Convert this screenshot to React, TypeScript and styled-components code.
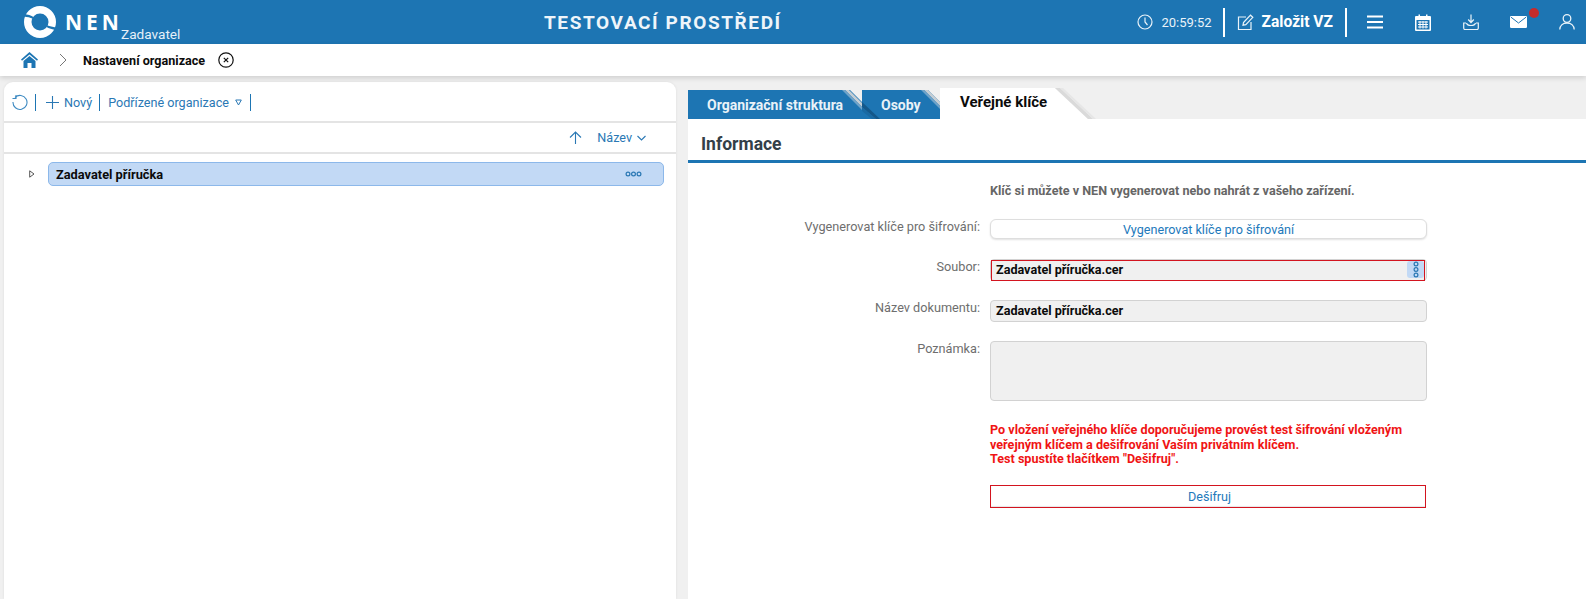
import React from "react";
import styled, { createGlobalStyle } from "styled-components";

const Global = createGlobalStyle`
  html, body { margin: 0; padding: 0; height: 100%; overflow: hidden; background: #f0f0f0; }
  body { font-family: Roboto, "Liberation Sans", sans-serif; }
  #root { height: 599px; width: 1586px; }
  * { box-sizing: border-box; }
`;

const Page = styled.div`
  display: flex; flex-direction: column; width: 1586px; height: 599px; overflow: hidden; background: #f0f0f0;
`;
const Header = styled.header`
  flex: none; height: 44px; background: #1d75b3; color: #fff; display: flex; align-items: stretch;
`;
const Brand = styled.div`
  width: 544px; flex: none; display: flex; padding-left: 24px; align-items: flex-start;
`;
const LogoMark = styled.svg`
  width: 32px; height: 32px; margin-top: 6px; flex: none;
`;
const BrandName = styled.span`
  font-weight: 700; font-size: 21px; letter-spacing: 4px; line-height: 26px; margin: 9px 0 0 9px; width: 56px; flex: none;
  font-family: "Open Sans", Roboto, sans-serif;
`;
const BrandRole = styled.span`
  font-size: 13.6px; line-height: 16px; margin-top: 26px; color: #e6f0f8;
`;
const EnvTitle = styled.div`
  font-weight: 700; font-size: 19px; letter-spacing: 1.6px; line-height: 46px; white-space: nowrap; color: #eef5fa;
`;
const HeaderRight = styled.div`
  margin-left: auto; display: flex; align-items: center; height: 44px; padding-right: 11px;
`;
const TimeText = styled.span`
  font-size: 13px; margin: 0 11px 0 8px; color: #eaf3f9;
`;
const HeaderSep = styled.span`
  width: 2px; height: 29px; background: #fff; flex: none;
`;
const CreateText = styled.span`
  font-size: 15.6px; font-weight: 700; margin: 0 12px 0 8px; white-space: nowrap;
`;
const HeaderIcon = styled.span<{ $gap: number }>`
  position: relative; display: flex; margin-left: ${(p) => p.$gap}px; color: #fff;
`;
const Badge = styled.span`
  position: absolute; width: 10px; height: 10px; border-radius: 50%; background: #c62b2b; right: -12px; top: -8px;
`;
const Crumbs = styled.nav`
  flex: none; height: 32px; background: #fff; display: flex; align-items: center; padding-left: 21px;
  box-shadow: 0 2px 5px rgba(0,0,0,.14); position: relative; z-index: 1;
`;
const CrumbChevron = styled.svg`
  margin-left: 21px;
`;
const CrumbText = styled.span`
  font-size: 12.6px; font-weight: 700; color: #0b0b0b; margin: 0 13px 0 16px; white-space: nowrap;
`;
const Body = styled.main`
  flex: 1; display: flex; min-height: 0; padding: 6px 0 0 4px; align-items: stretch;
`;
const LeftPanel = styled.section`
  width: 672px; flex: none; background: #fff; border-radius: 9px 9px 0 0; box-shadow: 0 0 3px rgba(0,0,0,.08);
  display: flex; flex-direction: column;
`;
const Toolbar = styled.div`
  height: 41px; flex: none; display: flex; align-items: center; padding: 1px 0 0 8px; border-bottom: 2px solid #e4e4e4;
  color: #1d75b3; font-size: 12.6px;
`;
const ToolSep = styled.span<{ $gap: number }>`
  width: 1px; height: 17px; background: #1d75b3; flex: none; margin-left: ${(p) => p.$gap}px;
`;
const ToolLabel = styled.span<{ $gap: number }>`
  white-space: nowrap; color: #2a78b4; margin-left: ${(p) => p.$gap}px;
`;
const ToolIcon = styled.svg<{ $gap: number }>`
  flex: none; margin-left: ${(p) => p.$gap}px;
`;
const SortRow = styled.div`
  height: 31px; flex: none; display: flex; align-items: center; justify-content: flex-end; padding-right: 30px;
  border-bottom: 2px solid #e4e4e4; color: #1d75b3; font-size: 12.6px;
`;
const TreeArea = styled.div`
  padding: 8px 12px 0 25px; display: flex; align-items: center; gap: 13px;
`;
const TreeRow = styled.div`
  flex: 1; height: 24px; background: #c2d9f5; border: 1px solid #8cb8ea; border-radius: 5px; display: flex; align-items: center;
  justify-content: space-between; padding: 0 21px 0 7px; font-size: 12.8px; font-weight: 700; color: #0b0b0b;
`;
const RightPanel = styled.section`
  width: 898px; margin-left: 12px; flex: none; display: flex; flex-direction: column; padding-top: 6px;
`;
const TabsWrap = styled.div`
  position: relative; display: flex; flex: none;
`;
const Tabs = styled.div`
  height: 31px; flex: none; display: flex; align-items: flex-end;
`;
const Tab = styled.div<{ $w: number }>`
  width: ${(p) => p.$w}px; height: 29px; background: #1d75b3; color: #e9f2f8;
  font-size: 14px; font-weight: 700; line-height: 30px; padding-left: 19px; white-space: nowrap;
  clip-path: polygon(0 0, calc(100% - 12px) 0, 100% 12px, 100% 100%, 0 100%);
`;
const ActiveTab = styled.div`
  width: 148px; height: 31px; background: #fff; color: #0b0b0b; font-size: 15px; font-weight: 700;
  line-height: 29px; padding-left: 20px; white-space: nowrap;
  clip-path: polygon(0 0, 115px 0, 100% 100%, 0 100%);
`;
const TabEdges = styled.svg`
  position: absolute; left: 0; top: 0; width: 410px; height: 31px; pointer-events: none;
`;
const Content = styled.div`
  flex: 1; background: #fff; min-height: 0; display: flex; flex-direction: column;
`;
const Heading = styled.h2`
  margin: 0; height: 44px; flex: none; border-bottom: 3px solid #1d75b3; padding-left: 13px; font-size: 17.5px; font-weight: 700;
  line-height: 51px; color: #333f48;
`;
const Form = styled.div`
  display: grid; grid-template-columns: 302px 437px; column-gap: 0; padding-top: 19px; align-items: start;
`;
const Hint = styled.div`
  grid-column: 2; font-size: 12.6px; font-weight: 700; color: #666; line-height: 18px; height: 37px;
`;
const Label = styled.div<{ $h: number }>`
  grid-column: 1; text-align: right; padding-right: 10px; font-size: 12.7px; color: #6e6e6e; line-height: 16px; height: ${(p) => p.$h}px; white-space: nowrap;
`;
const ActionButton = styled.div`
  grid-column: 2; height: 20px; margin-bottom: 20px; border: 1px solid #dedede; border-radius: 6px; background: #fff; text-align: center;
  font-size: 12.6px; line-height: 19px; color: #2279bb; box-shadow: 0 1px 2px rgba(0,0,0,.12);
`;
const Field = styled.div`
  grid-column: 2; position: relative; height: 22px; margin-bottom: 19px; background: #f0f0f0; border: 1px solid #d2d2d2; border-radius: 4px;
  font-size: 12.6px; font-weight: 700; color: #0b0b0b; line-height: 20px; padding-left: 5px;
`;
const FieldAlert = styled.span`
  position: absolute; left: 0; top: 0; right: 1px; bottom: -1px; border: 1px solid #d3141f; pointer-events: none;
`;
const DotsButton = styled.span`
  position: absolute; right: 2px; top: 1px; width: 17px; height: 17px; background: #c2d9f5; border-radius: 3px; display: flex; align-items: center; justify-content: center;
`;
const TextBox = styled.div`
  grid-column: 2; height: 60px; margin-bottom: 22px; background: #f0f0f0; border: 1px solid #d2d2d2; border-radius: 4px;
`;
const Warning = styled.div`
  grid-column: 2; font-size: 12.6px; font-weight: 700; color: #f01414; line-height: 14.7px; height: 62px; white-space: nowrap;
`;
const DecryptButton = styled.div`
  grid-column: 2; height: 23px; width: 436px; border: 1px solid #d3141f; background: #fff; text-align: center; font-size: 12.6px; line-height: 22px; color: #2279bb;
  padding-left: 3px; box-shadow: inset 0 -1px 1px rgba(0,0,0,.1);
`;

const Dots = ({ vertical }: { vertical?: boolean }) => (
  <svg width={vertical ? 6 : 17} height={vertical ? 17 : 6} viewBox={vertical ? "0 0 6 17" : "0 0 17 6"} fill="none" stroke="#2a78b4" strokeWidth="1.2">
    {[3, 8.5, 14].map((c) => (vertical ? <circle key={c} cx="3" cy={c} r="1.9" /> : <circle key={c} cx={c} cy="3" r="1.9" />))}
  </svg>
);

export default function App() {
  return (
    <Page>
      <Global />
      <Header>
        <Brand>
          <LogoMark viewBox="0 0 32 32">
            <path fill="#fff" fillRule="evenodd" d="M16 0A16 16 0 1 1 16 32A16 16 0 1 1 16 0ZM16 7.5A8.5 8.5 0 1 0 16 24.5A8.5 8.5 0 1 0 16 7.5Z" />
            <path fill="#1d75b3" d="M-0.5 8C3.5 8.5 7 9.2 9.8 11.2L8.8 12.8C6.2 11.6 3 11 -0.5 10.5Z" />
            <path fill="#1d75b3" d="M32.5 24C28.5 23.5 25 22.8 22.2 20.8L23.2 19.2C25.8 20.4 29 21 32.5 21.5Z" />
          </LogoMark>
          <BrandName>NEN</BrandName>
          <BrandRole>Zadavatel</BrandRole>
        </Brand>
        <EnvTitle>TESTOVACÍ PROSTŘEDÍ</EnvTitle>
        <HeaderRight>
          <svg width="16" height="16" viewBox="0 0 16 16" fill="none" stroke="#eaf3f9" strokeWidth="1.2"><circle cx="8" cy="8" r="7" /><path d="M8 3.5V8L10.5 11" /></svg>
          <TimeText>20:59:52</TimeText>
          <HeaderSep />
          <HeaderIcon $gap={12}>
            <svg width="17" height="17" viewBox="0 0 17 17" fill="none" stroke="#eaf3f9" strokeWidth="1.2"><path d="M9 3H1.5V15.5H14V8" /><path d="M6.5 8.5L13.5 1.2L15.8 3.3L8.8 10.6L6 11.2Z" /></svg>
          </HeaderIcon>
          <CreateText>Založit VZ</CreateText>
          <HeaderSep />
          <HeaderIcon $gap={20}>
            <svg width="16" height="14" viewBox="0 0 16 14" fill="none" stroke="#fff" strokeWidth="2"><path d="M0 1.5H16M0 7H16M0 12.5H16" /></svg>
          </HeaderIcon>
          <HeaderIcon $gap={32}>
            <svg width="16" height="17" viewBox="0 0 16 17"><path fill="#fff" fillRule="evenodd" d="M1 2H3.5V0.5H5V2H11V0.5H12.5V2H15Q16 2 16 3V16Q16 17 15 17H1Q0 17 0 16V3Q0 2 1 2ZM1.5 6V15.5H14.5V6Z" /><path stroke="#fff" strokeWidth="1" d="M3 8H13M3 10.5H13M3 13H13M5 7V14.5M8 7V14.5M11 7V14.5" /></svg>
          </HeaderIcon>
          <HeaderIcon $gap={32}>
            <svg width="16" height="16" viewBox="0 0 16 16" fill="none" stroke="#eaf3f9" strokeWidth="1.2"><path d="M8 0.5V8M5.2 5.5L8 8.5L10.8 5.5" /><path d="M3 9H0.7V14Q0.7 15.5 2 15.5H14Q15.3 15.5 15.3 14V9H13" /><path d="M3.5 9C4 11 6 11.5 8 11.5S12 11 12.5 9" /></svg>
          </HeaderIcon>
          <HeaderIcon $gap={31}>
            <svg width="17" height="12" viewBox="0 0 17 12"><rect width="17" height="12" rx="1.2" fill="#fff" /><path d="M1 1.2L8.5 7L16 1.2" fill="none" stroke="#1d75b3" strokeWidth="1" /></svg>
            <Badge />
          </HeaderIcon>
          <HeaderIcon $gap={32}>
            <svg width="16" height="16" viewBox="0 0 16 16" fill="none" stroke="#eaf3f9" strokeWidth="1.3"><circle cx="8" cy="4.5" r="3.8" /><path d="M0.8 15.5C1 11.5 4 9 8 9S15 11.5 15.2 15.5" /></svg>
          </HeaderIcon>
        </HeaderRight>
      </Header>
      <Crumbs>
        <svg width="17" height="16" viewBox="0 0 17 16"><path fill="#1d75b3" d="M8.5 0L17 7.5L16 8.8L8.5 2.5L1 8.8L0 7.5Z" /><path fill="#1d75b3" d="M8.5 4L14.5 9V16H10.5V11H6.5V16H2.5V9Z" /></svg>
        <CrumbChevron width="8" height="14" viewBox="0 0 8 14" fill="none" stroke="#777" strokeWidth="1"><path d="M1 1L7 7L1 13" /></CrumbChevron>
        <CrumbText>Nastavení organizace</CrumbText>
        <svg width="16" height="16" viewBox="0 0 16 16" fill="none" stroke="#111" strokeWidth="1.2"><circle cx="8" cy="8" r="7.2" /><path d="M5.8 5.8L10.2 10.2M10.2 5.8L5.8 10.2" /></svg>
      </Crumbs>
      <Body>
        <LeftPanel>
          <Toolbar>
            <svg width="16" height="16" viewBox="0 0 16 16" fill="none" stroke="#3d8ac2" strokeWidth="1.1"><path d="M3 3.5A7 7 0 1 1 1 8" /><path d="M0.5 4.5H4V1" /></svg>
            <ToolSep $gap={7} />
            <ToolIcon $gap={10} width="13" height="13" viewBox="0 0 13 13" stroke="#2a78b4" strokeWidth="1.1"><path d="M6.5 0V13M0 6.5H13" /></ToolIcon>
            <ToolLabel $gap={5}>Nový</ToolLabel>
            <ToolSep $gap={7} />
            <ToolLabel $gap={8}>Podřízené organizace</ToolLabel>
            <ToolIcon $gap={6} width="7" height="7" viewBox="0 0 7 7" fill="none" stroke="#2a78b4" strokeWidth="1"><path d="M0.7 1H6.3L3.5 6Z" /></ToolIcon>
            <ToolSep $gap={8} />
          </Toolbar>
          <SortRow>
            <svg width="13" height="13" viewBox="0 0 13 13" fill="none" stroke="#2a78b4" strokeWidth="1.1"><path d="M6.5 13V1M1 6.5L6.5 1L12 6.5" /></svg>
            <ToolLabel $gap={15}>Název</ToolLabel>
            <ToolIcon $gap={5} width="9" height="6" viewBox="0 0 9 6" fill="none" stroke="#2a78b4" strokeWidth="1.1"><path d="M0.5 1L4.5 5L8.5 1" /></ToolIcon>
          </SortRow>
          <TreeArea>
            <svg width="6" height="8" viewBox="0 0 6 8" fill="none" stroke="#555" strokeWidth="1"><path d="M0.7 0.8L5 4L0.7 7.2Z" /></svg>
            <TreeRow>
              Zadavatel příručka
              <Dots />
            </TreeRow>
          </TreeArea>
        </LeftPanel>
        <RightPanel>
          <TabsWrap>
            <Tabs>
              <Tab $w={174}>Organizační struktura</Tab>
              <Tab $w={78}>Osoby</Tab>
              <ActiveTab>Veřejné klíče</ActiveTab>
            </Tabs>
            <TabEdges viewBox="0 0 410 31">
              <path d="M161 2L174 15V19L157 2Z" fill="#c4cdd4" />
              <path d="M157 2L174 19V22L154 2Z" fill="#6fa3c9" />
              <path d="M174 14L192 31H188L174 19Z" fill="#14588a" />
              <path d="M174 19L188 31H184L174 23Z" fill="#1a6aa3" />
              <path d="M240 2L252 14V18L236 2Z" fill="#c4cdd4" />
              <path d="M236 2L252 18V21L233 2Z" fill="#6fa3c9" />
              <path d="M367 0L400 31H405L372 0Z" fill="#dadada" />
              <path d="M372 0L405 31H408L375 0Z" fill="#e6e6e6" />
            </TabEdges>
          </TabsWrap>
          <Content>
            <Heading>Informace</Heading>
            <Form>
              <Hint>Klíč si můžete v NEN vygenerovat nebo nahrát z vašeho zařízení.</Hint>
              <Label $h={20}>Vygenerovat klíče pro šifrování:</Label>
              <ActionButton>Vygenerovat klíče pro šifrování</ActionButton>
              <Label $h={22}>Soubor:</Label>
              <Field>
                Zadavatel příručka.cer
                <FieldAlert />
                <DotsButton><Dots vertical /></DotsButton>
              </Field>
              <Label $h={22}>Název dokumentu:</Label>
              <Field>Zadavatel příručka.cer</Field>
              <Label $h={60}>Poznámka:</Label>
              <TextBox />
              <Warning>
                Po vložení veřejného klíče doporučujeme provést test šifrování vloženým<br />
                veřejným klíčem a dešifrování Vaším privátním klíčem.<br />
                Test spustíte tlačítkem "Dešifruj".
              </Warning>
              <DecryptButton>Dešifruj</DecryptButton>
            </Form>
          </Content>
        </RightPanel>
      </Body>
    </Page>
  );
}
